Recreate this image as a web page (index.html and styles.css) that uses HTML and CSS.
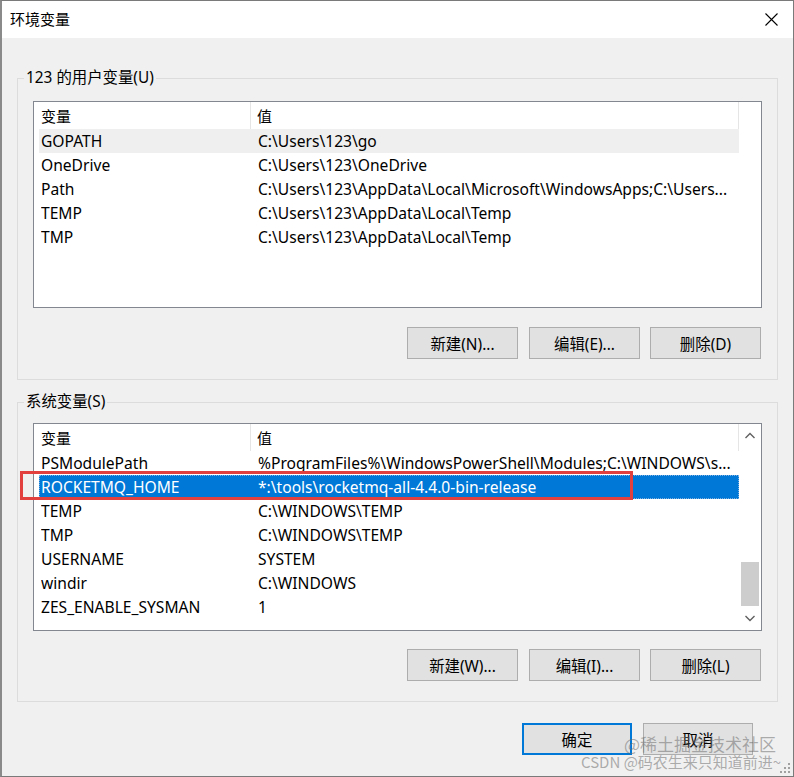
FILE: index.html
```html
<!DOCTYPE html>
<html lang="zh-CN">
<head>
<meta charset="utf-8">
<title>环境变量</title>
<link rel="stylesheet" href="styles.css">
</head>
<body>
<div class="window">
  <div class="titlebar">
    <span class="title">环境变量</span>
    <svg class="close" width="13" height="13" viewBox="0 0 13 13"><path d="M0.5 0.5 L12.5 12.5 M12.5 0.5 L0.5 12.5" stroke="#000" stroke-width="1.1" fill="none"/></svg>
  </div>
  <div class="content">
    <fieldset class="group group-user">
      <legend>123 的用户变量(U)</legend>
      <div class="group-body">
        <div class="list list-user">
          <div class="list-head">
            <div class="hcell hcell-name">变量</div>
            <div class="hcell hcell-value">值</div>
          </div>
          <div class="list-main">
            <div class="rows">
              <div class="row row-hover"><span>GOPATH</span><span>C:\Users\123\go</span></div>
              <div class="row"><span>OneDrive</span><span>C:\Users\123\OneDrive</span></div>
              <div class="row"><span>Path</span><span>C:\Users\123\AppData\Local\Microsoft\WindowsApps;C:\Users...</span></div>
              <div class="row"><span>TEMP</span><span>C:\Users\123\AppData\Local\Temp</span></div>
              <div class="row"><span>TMP</span><span>C:\Users\123\AppData\Local\Temp</span></div>
            </div>
          </div>
        </div>
        <div class="btn-row">
          <button class="btn">新建(N)...</button>
          <button class="btn">编辑(E)...</button>
          <button class="btn">删除(D)</button>
        </div>
      </div>
    </fieldset>

    <fieldset class="group group-sys">
      <legend>系统变量(S)</legend>
      <div class="group-body group-body-sys">
        <div class="list list-sys">
          <div class="list-main">
            <div class="rows">
              <div class="list-head">
                <div class="hcell hcell-name">变量</div>
                <div class="hcell hcell-value">值</div>
              </div>
              <div class="row"><span>PSModulePath</span><span>%ProgramFiles%\WindowsPowerShell\Modules;C:\WINDOWS\s...</span></div>
              <div class="row row-selected"><span>ROCKETMQ_HOME</span><span>*:\tools\rocketmq-all-4.4.0-bin-release</span><div class="mark"></div></div>
              <div class="row"><span>TEMP</span><span>C:\WINDOWS\TEMP</span></div>
              <div class="row"><span>TMP</span><span>C:\WINDOWS\TEMP</span></div>
              <div class="row"><span>USERNAME</span><span>SYSTEM</span></div>
              <div class="row"><span>windir</span><span>C:\WINDOWS</span></div>
              <div class="row"><span>ZES_ENABLE_SYSMAN</span><span>1</span></div>
            </div>
            <div class="scrollbar">
              <svg class="arrow" width="20" height="24" viewBox="0 0 20 24"><path d="M5.5 14 L10 9.5 L14.5 14" stroke="#606060" stroke-width="1.4" fill="none"/></svg>
              <div class="track"><div class="thumb"></div></div>
              <svg class="arrow" width="20" height="24" viewBox="0 0 20 24"><path d="M5.5 10 L10 14.5 L14.5 10" stroke="#606060" stroke-width="1.4" fill="none"/></svg>
            </div>
          </div>
        </div>
        <div class="btn-row">
          <button class="btn">新建(W)...</button>
          <button class="btn">编辑(I)...</button>
          <button class="btn">删除(L)</button>
        </div>
      </div>
    </fieldset>

    <div class="footer">
      <button class="btn btn-default">确定</button>
      <button class="btn btn-cancel">取消</button>
    </div>
  </div>
  <div class="watermark wm1">@稀土掘金技术社区</div>
  <div class="watermark wm2">CSDN @码农生来只知道前进~</div>
  <svg class="grip" width="12" height="12" viewBox="0 0 12 12">
    <rect x="9" y="1" width="2" height="2" fill="#a0a0a0"/>
    <rect x="5" y="5" width="2" height="2" fill="#a0a0a0"/>
    <rect x="9" y="5" width="2" height="2" fill="#a0a0a0"/>
    <rect x="1" y="9" width="2" height="2" fill="#a0a0a0"/>
    <rect x="5" y="9" width="2" height="2" fill="#a0a0a0"/>
    <rect x="9" y="9" width="2" height="2" fill="#a0a0a0"/>
  </svg>
</div>
</body>
</html>
```

FILE: styles.css
```css
* { box-sizing: border-box; }
html, body { margin: 0; padding: 0; }
body {
  font-family: "Noto Sans", "Noto Sans CJK SC", sans-serif;
  font-size: 15px;
  color: #000;
  background: #f0f0f0;
}
.window {
  position: relative;
  width: 794px;
  height: 777px;
  border: 1px solid #7a7a7a;
  border-left: 2px solid #8a8a8a;
  display: flex;
  flex-direction: column;
  background: #f0f0f0;
  overflow: hidden;
}
.titlebar {
  height: 37px;
  flex: none;
  background: #fff;
  display: flex;
  align-items: center;
  justify-content: space-between;
  padding: 0 15px 1px 8px;
}
.title { font-size: 15px; line-height: 20px; }
.close { display: block; }
.content {
  flex: 1;
  padding: 30px 15px 0 15px;
  display: flex;
  flex-direction: column;
}
.group {
  margin: 0;
  padding: 0;
  border: 1px solid #dcdcdc;
  min-width: 0;
}
.group legend {
  margin-left: 6px;
  padding: 0 2px;
  font-size: 15.4px;
  line-height: 20px;
}
.group-sys { margin-top: 12px; }
.group-body {
  padding: 13px 16px 20px 15px;
}
.group-body-sys { padding-top: 11px; }
.list {
  background: #fff;
  border: 1px solid #828790;
  position: relative;
  margin-right: -1px;
}
.list-user { height: 207px; }
.list-sys { height: 208px; }
.list-head {
  display: grid;
  grid-template-columns: 217px 1fr;
  height: 27px;
  width: 705px;
}
.list-sys .list-head { margin-left: -5px; }
.hcell {
  line-height: 25px;
  padding-top: 2px;
  padding-left: 7px;
}
.hcell-name { border-right: 1px solid #e5e5e5; }
.hcell-value { padding-left: 6px; border-right: 1px solid #e5e5e5; }
.list-main {
  display: flex;
  padding-left: 5px;
}
.list-sys .list-main { height: 100%; }
.rows {
  width: 700px;
  flex: none;
}
.row {
  position: relative;
  display: grid;
  grid-template-columns: 217px 1fr;
  height: 24px;
  line-height: 24px;
  padding-left: 2px;
  white-space: nowrap;
  font-size: 15.6px;
}
.row span { overflow: hidden; }
.row-hover { background: #efefef; }
.row-selected {
  background: #0078d7;
  color: #fff;
  outline: 1px dotted #7fb0e0;
  outline-offset: -1px;
}
.mark {
  position: absolute;
  left: -19px;
  top: -4px;
  width: 613px;
  height: 29px;
  border: 3px solid #e2403f;
}
.scrollbar {
  width: 20px;
  margin-left: 1px;
  display: flex;
  flex-direction: column;
  background: #fff;
}
.arrow { display: block; flex: none; }
.track {
  flex: 1;
  display: flex;
  flex-direction: column;
  justify-content: flex-end;
  padding: 0 1px 0 1px;
}
.thumb {
  height: 44px;
  background: #cdcdcd;
}
.btn-row {
  display: flex;
  justify-content: flex-end;
  gap: 10px;
  margin-top: 19px;
}
.group-sys .btn-row { margin-top: 18px; }
.btn {
  width: 111px;
  height: 32px;
  background: #e1e1e1;
  border: 1px solid #adadad;
  font-family: "Noto Sans", "Noto Sans CJK SC", sans-serif;
  font-size: 15.4px;
  color: #000;
  padding: 0;
  margin: 0;
}
.btn-row .btn:nth-child(2) { margin-left: 1px; }
.footer {
  display: flex;
  justify-content: flex-end;
  gap: 11px;
  margin-top: 21px;
  padding-right: 25px;
}
.btn-default {
  width: 110px;
  border: 2px solid #0078d7;
}
.btn-cancel { width: 110px; }
.watermark {
  position: absolute;
  color: rgba(110, 110, 110, 0.55);
  white-space: nowrap;
  font-family: "Noto Sans CJK SC", "Noto Sans", sans-serif;
}
.wm1 {
  left: 622px;
  top: 731px;
  font-size: 17px;
  line-height: 24px;
}
.wm2 {
  left: 579px;
  top: 751px;
  font-size: 15px;
  line-height: 20px;
}
.grip {
  position: absolute;
  right: 2px;
  bottom: 2px;
}
```
